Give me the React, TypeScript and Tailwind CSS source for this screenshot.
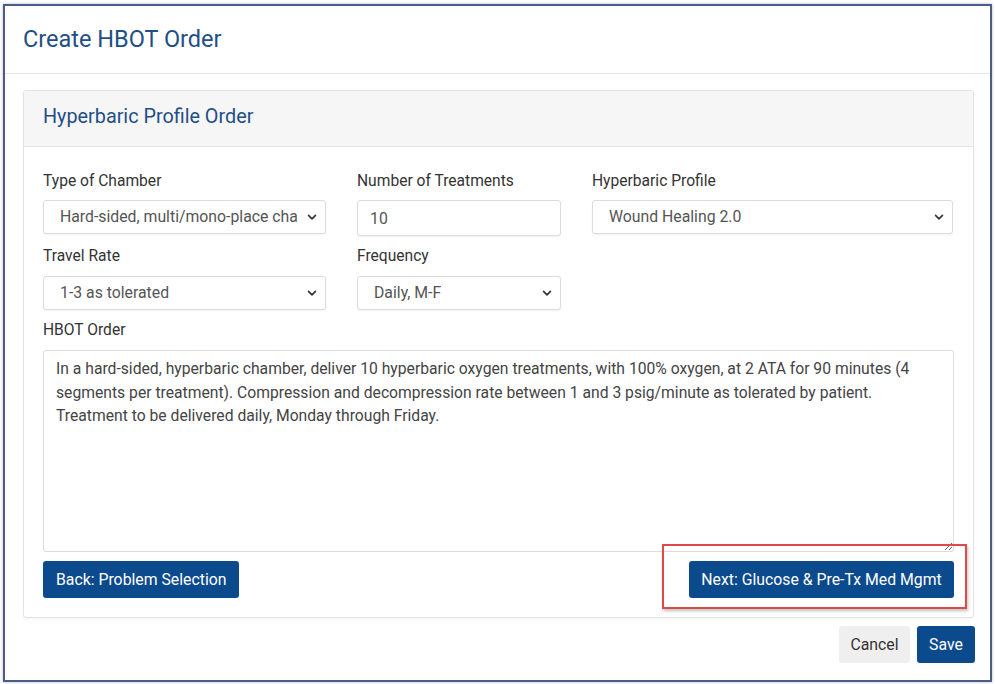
import React from "react"

function Chevron() {
  return (
    <svg className="pointer-events-none absolute right-[9px] top-1/2 -translate-y-1/2" width="10" height="10" viewBox="0 0 16 16">
      <path d="M2.5 5.5l5.5 5.5 5.5-5.5" fill="none" stroke="#333" strokeWidth="2.6" strokeLinecap="round" strokeLinejoin="round" />
    </svg>
  )
}

function Select({ value, className }: { value: string; className?: string }) {
  return (
    <div className={"relative " + (className ?? "")}>
      <select
        defaultValue={value}
        className="block h-[34px] w-full appearance-none rounded-[3px] border border-[#dcdcdc] bg-white pl-[16px] pr-[28px] text-[15.8px] text-[#555] shadow-[0_1px_2px_rgba(0,0,0,0.06)] outline-none"
      >
        <option value={value}>{value}</option>
      </select>
      <Chevron />
    </div>
  )
}

function Label({ children }: { children: React.ReactNode }) {
  return <label className="block h-[20px] text-[15.6px] leading-[20px] text-[#333]">{children}</label>
}

export default function App() {
  const order =
    "In a hard-sided, hyperbaric chamber, deliver 10 hyperbaric oxygen treatments, with 100% oxygen, at 2 ATA for 90 minutes (4 segments per treatment). Compression and decompression rate between 1 and 3 psig/minute as tolerated by patient. Treatment to be delivered daily, Monday through Friday."

  return (
    <div className="h-[684px] w-[995px] bg-white pl-[3px] pt-[4px]" style={{ fontFamily: "Roboto, 'Liberation Sans', sans-serif" }}>
      <div className="flex h-[678px] w-[989px] flex-col border-2 border-[#4d5c85] bg-white shadow-[0_0_3px_rgba(60,80,130,0.4)]">
        <div className="flex h-[68px] shrink-0 items-center border-b border-[#e6e6e6] pl-[18px]">
          <h1 className="text-[23.5px] leading-none text-[#1f4f86]">Create HBOT Order</h1>
        </div>

        <div className="px-[16px] pl-[18px] pt-[16px]">
          <div className="rounded-[3px] border border-[#e3e3e3] shadow-[0_1px_2px_rgba(0,0,0,0.05)]">
            <div className="flex h-[56px] items-center border-b border-[#e3e3e3] bg-[#f6f6f6] pb-[3px] pl-[19px]">
              <h2 className="text-[19.8px] leading-none text-[#1f4f86]">Hyperbaric Profile Order</h2>
            </div>

            <div className="px-[19px] pb-[19px] pt-[24px]">
              <div className="grid grid-cols-[283px_204px_361px] gap-x-[31px]">
                <div>
                  <Label>Type of Chamber</Label>
                  <Select className="mt-[9px]" value="Hard-sided, multi/mono-place chamber" />
                </div>
                <div>
                  <Label>Number of Treatments</Label>
                  <input
                    defaultValue="10"
                    className="mt-[9px] block h-[36px] w-full rounded-[3px] border border-[#dcdcdc] bg-white px-[12px] text-[15.8px] text-[#555] shadow-[0_1px_2px_rgba(0,0,0,0.06)] outline-none"
                  />
                </div>
                <div>
                  <Label>Hyperbaric Profile</Label>
                  <Select className="mt-[9px]" value="Wound Healing 2.0" />
                </div>

                <div className="mt-[10px]">
                  <Label>Travel Rate</Label>
                  <Select className="mt-[10px]" value="1-3 as tolerated" />
                </div>
                <div className="mt-[10px]">
                  <Label>Frequency</Label>
                  <Select className="mt-[10px]" value="Daily, M-F" />
                </div>
                <div />
              </div>

              <div className="mt-[10px]">
                <Label>HBOT Order</Label>
                <textarea
                  defaultValue={order}
                  className="mt-[10px] block h-[202px] w-full rounded-[3px] border border-[#dcdcdc] bg-white px-[12px] py-[6px] text-[15.7px] leading-[23.5px] text-[#444] outline-none"
                />
              </div>

              <div className="mt-[9px] flex items-center justify-between">
                <button className="h-[37px] rounded-[3px] bg-[#0c4a8e] px-[13px] text-[15.8px] text-white">Back: Problem Selection</button>
                <div className="relative">
                  <div className="pointer-events-none absolute -bottom-[11px] -left-[27px] -right-[13px] -top-[17px] border-2 border-[#dc4b4b] shadow-[1px_2px_3px_rgba(0,0,0,0.25)]" />
                  <button className="relative h-[37px] w-[265px] rounded-[3px] bg-[#0c4a8e] text-[15.8px] text-white">Next: Glucose &amp; Pre-Tx Med Mgmt</button>
                </div>
              </div>
            </div>
          </div>
        </div>

        <div className="flex justify-end gap-[7px] pr-[15px] pt-[8px]">
          <button className="h-[37px] w-[71px] rounded-[3px] bg-[#efefef] text-[15.8px] text-[#333]">Cancel</button>
          <button className="h-[37px] w-[58px] rounded-[3px] bg-[#0c4a8e] text-[15.8px] text-white">Save</button>
        </div>
      </div>
    </div>
  )
}
